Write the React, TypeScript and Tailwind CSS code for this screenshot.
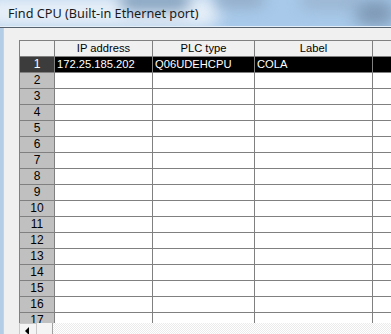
import React from "react";

const ROWS = Array.from({ length: 18 }, (_, i) => i + 1);

const DATA: Record<number, { ip: string; plc: string; label: string }> = {
  1: { ip: "172.25.185.202", plc: "Q06UDEHCPU", label: "COLA" },
};

function HeaderRow() {
  return (
    <div className="flex h-[16px] shrink-0 border-b border-[#808080] bg-[#f0f0f0]">
      <div className="w-[35px] shrink-0 border-r border-[#808080]" />
      <div className="w-[98px] shrink-0 border-r border-[#808080] text-center leading-[15px]">IP address</div>
      <div className="w-[102px] shrink-0 border-r border-[#808080] text-center leading-[15px]">PLC type</div>
      <div className="w-[118px] shrink-0 border-r border-[#808080] text-center leading-[15px]">Label</div>
      <div className="flex-1" />
    </div>
  );
}

function Row({ n }: { n: number }) {
  const d = DATA[n];
  const selected = n === 1;
  const cell = selected ? "bg-black text-white" : "bg-white text-black";
  return (
    <div className="flex h-[16px] shrink-0 border-b border-[#808080]">
      <div
        className={`w-[35px] shrink-0 border-r border-[#808080] text-center text-[12px] leading-[15px] ${
          selected ? "bg-[#3c3c3c] text-white" : "bg-[#c0c0c0] text-black"
        }`}
      >
        {n}
      </div>
      <div className={`w-[98px] shrink-0 overflow-hidden whitespace-nowrap border-r border-[#808080] pl-[2px] leading-[15px] ${cell}`}>{d?.ip}</div>
      <div className={`w-[102px] shrink-0 overflow-hidden whitespace-nowrap border-r border-[#808080] pl-[2px] leading-[15px] ${cell}`}>{d?.plc}</div>
      <div className={`w-[118px] shrink-0 overflow-hidden whitespace-nowrap border-r border-[#808080] pl-[2px] leading-[15px] ${cell}`}>{d?.label}</div>
      <div className={`flex-1 ${cell}`} />
    </div>
  );
}

export default function App() {
  return (
    <div className="relative flex h-[334px] w-[391px] flex-col overflow-hidden bg-[#f0f0f0] font-['Liberation_Sans',Arial,sans-serif] text-[11.2px]">
      {/* glass title bar */}
      <div className="relative h-[26px] shrink-0 overflow-hidden bg-[#a8c9ea]">
        <div className="absolute -left-[20px] top-[-4px] h-[32px] w-[240px] rounded-full bg-[#e6eff8] blur-[8px]" />
        <div className="absolute left-[120px] top-[-10px] h-[22px] w-[70px] rounded-full bg-[#8aa6c2] blur-[7px]" />
        <div className="absolute left-[215px] top-[-10px] h-[18px] w-[50px] rounded-full bg-[#93adc8] blur-[7px]" />
        <div className="absolute left-[300px] top-[-8px] h-[18px] w-[60px] rounded-full bg-[#9bb6d2] blur-[7px]" />
        <div className="absolute left-[355px] top-[0px] h-[26px] w-[40px] rounded-full bg-[#7d98b4] blur-[8px]" />
        <span className="absolute left-[8px] top-[5px] font-['Noto_Sans',sans-serif] text-[12.7px] leading-[16px] text-[#1a1a1a]">
          Find CPU (Built-in Ethernet port)
        </span>
      </div>
      <div className="h-px shrink-0 bg-[#e4eef8]" />
      <div className="h-px shrink-0 bg-[#56626e]" />

      <div className="flex min-h-0 flex-1">
        <div className="w-[3px] shrink-0 bg-[#b4cde6]" />
        <div className="flex min-w-0 flex-1 flex-col border-l border-[#c8d2dc] pl-[15px] pt-[12px]">
          <div className="flex h-[283px] shrink-0 flex-col overflow-hidden border-l border-t border-[#808080]">
            <HeaderRow />
            {ROWS.map((n) => (
              <Row key={n} n={n} />
            ))}
          </div>
          <div className="flex h-[17px] shrink-0">
            <div className="flex w-[18px] shrink-0 items-start border border-[#c8c8c8] bg-[#f4f4f4] pl-[5px] pt-[3px]">
              <div className="h-0 w-0 border-y-[4px] border-r-[4px] border-y-transparent border-r-black" />
            </div>
            <div className="w-[16px] shrink-0 border-r border-[#a0a0a0] bg-[#f4f4f4]" />
            <div className="flex-1 bg-[repeating-conic-gradient(#ffffff_0_25%,#ebebeb_0_50%)] bg-[length:2px_2px]" />
          </div>
        </div>
      </div>
    </div>
  );
}
